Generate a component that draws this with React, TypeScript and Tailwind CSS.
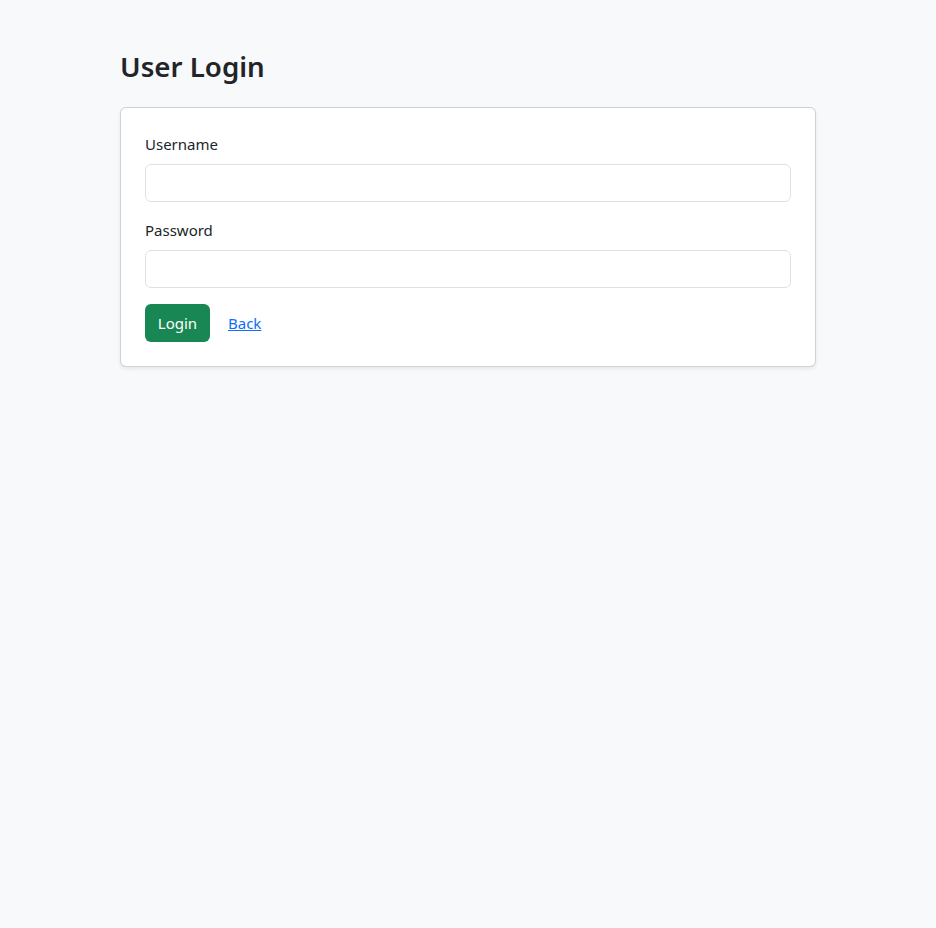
import React from "react";

export default function App() {
  return (
    <div
      className="min-h-[928px] bg-[#f8f9fa] text-[#212529] text-[15px]"
      style={{ fontFamily: '"Noto Sans", "Open Sans", sans-serif' }}
    >
      <div className="mx-auto w-[720px] px-3 pt-[49px]">
        <h2 className="mb-[22px] text-[27.7px] font-semibold leading-[35.5px]">User Login</h2>

        <div className="rounded-md border border-black/[0.175] bg-white p-6 shadow-[0_2px_4px_rgba(0,0,0,0.075)]">
          <form onSubmit={(e) => e.preventDefault()}>
            <div className="mb-4">
              <label htmlFor="username" className="mb-2 block leading-6">
                Username
              </label>
              <input
                id="username"
                type="text"
                className="block h-[38px] w-full rounded-md border border-[#dee2e6] bg-white px-3 outline-none"
              />
            </div>
            <div className="mb-4">
              <label htmlFor="password" className="mb-2 block leading-6">
                Password
              </label>
              <input
                id="password"
                type="password"
                className="block h-[38px] w-full rounded-md border border-[#dee2e6] bg-white px-3 outline-none"
              />
            </div>
            <div className="flex items-center gap-[18px]">
              <button
                type="submit"
                className="h-[38px] w-[65px] rounded-md bg-[#198754] leading-6 text-white"
              >
                Login
              </button>
              <a href="#" className="pt-[2px] text-[#0d6efd] underline">
                Back
              </a>
            </div>
          </form>
        </div>
      </div>
    </div>
  );
}
